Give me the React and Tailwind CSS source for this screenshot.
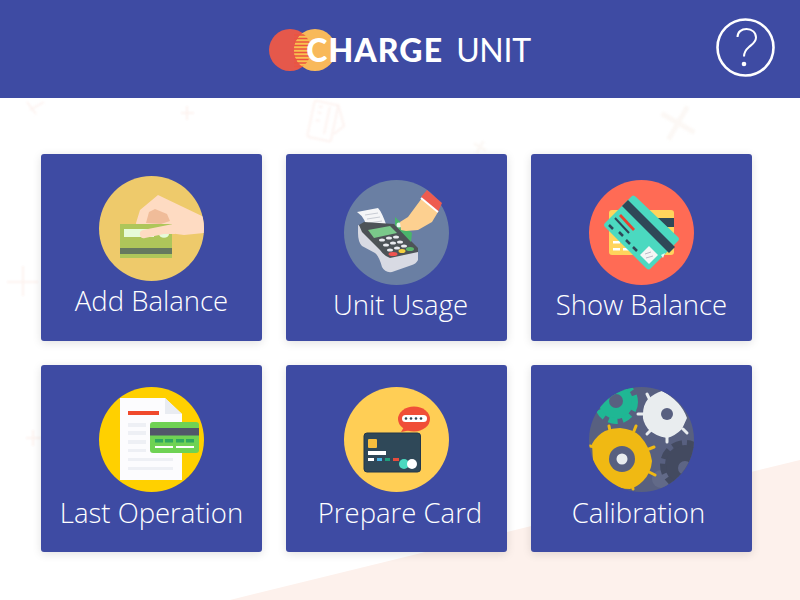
const Backdrop = () => (
  <>
    <svg className="absolute inset-0 w-full h-full" viewBox="0 0 800 502" fill="none">
      <path d="M230 502 L800 362 V502 Z" fill="#fdf1ec" />
    </svg>
    <svg className="absolute inset-0 w-full h-full blur-[1px]" viewBox="0 0 800 502" fill="none">
      <g stroke="#fdf3f0" strokeWidth="2">
        <path d="M23 168 V198 M7 184 H38" />
        <path d="M187 8 V22 M181 15 H194" />
        <path d="M27 4 L36 16 M30 12 L44 4" />
        <path d="M33 332 V348 M26 340 H41" />
        <g transform="rotate(12 325 22)">
          <rect x="311" y="5" width="24" height="37" rx="2" />
          <path d="M316 10 h4 M316 16 h4 M316 24 h4 M327 8 V36" />
        </g>
        <path d="M338 6 L344 28 L334 36" />
      </g>
      <g stroke="#fcf8f5">
        <path d="M678 6 V44 M659 25 H697" strokeWidth="5" transform="rotate(30 678 25)" />
        <path d="M480 42 V56 M473 49 H487" strokeWidth="3" transform="rotate(30 480 49)" />
      </g>
    </svg>
  </>
);

const Logo = () => (
  <div className="flex items-center h-[42px] mt-[2px]">
    <svg className="w-[67px] h-[42px] shrink-0" viewBox="0 0 67 42">
      <defs>
        <clipPath id="logo-overlap">
          <circle cx="21" cy="21" r="21" />
        </clipPath>
      </defs>
      <circle cx="21" cy="21" r="21" fill="#e5584b" />
      <circle cx="46" cy="21" r="21" fill="#f8b95a" />
      <g clipPath="url(#logo-overlap)">
        <circle cx="46" cy="21" r="21" fill="#f8c150" />
        <path d="M25 6 H42 M25 9.5 H42 M25 13 H42 M25 16.5 H42 M25 20 H42 M25 23.5 H42 M25 27 H42 M25 30.5 H42 M25 34 H42 M25 37.5 H42" stroke="#ec5340" strokeWidth="1.6" />
      </g>
    </svg>
    <span className="ml-[-30px] font-['Lato'] font-black text-[32px] leading-none text-white tracking-[1.1px] relative">CHARGE</span>
    <span className="ml-[13px] font-['Lato'] font-normal text-[32px] leading-none text-white tracking-[-0.3px]">UNIT</span>
  </div>
);

const HelpIcon = () => (
  <svg className="w-[59px] h-[59px]" viewBox="0 0 59 59" fill="none" stroke="#fff">
    <circle cx="29.5" cy="29.5" r="28" strokeWidth="2.6" />
    <path d="M21.5 19 C21.5 14 25.5 11 30.5 11 C36 11 40 14.5 40 19.5 C40 24 36.5 26 33 29 C29.5 32 28 34 28 38.5" strokeWidth="2" />
    <circle cx="28" cy="46" r="2.3" fill="#fff" stroke="none" />
  </svg>
);

const AddBalanceIcon = () => (
  <svg className="w-[105px] h-[105px]" viewBox="0 0 105 105">
    <defs>
      <clipPath id="c1"><circle cx="52.5" cy="52.5" r="52.5" /></clipPath>
    </defs>
    <circle cx="52.5" cy="52.5" r="52.5" fill="#eeca6b" />
    <g clipPath="url(#c1)">
      <path d="M37 47 L41 34 L59 19 L105 41 V57 L85 59 L70 57 L44 62 L38 55 Z" fill="#fedbc2" />
      <path d="M47 47 L50 36 L56 33 L68 38 L71 45 L62 48 Z" fill="#f0bc99" />
      <rect x="21" y="48" width="52" height="34" fill="#aec65a" />
      <rect x="21" y="72" width="52" height="6" fill="#66795f" />
      <rect x="25" y="53" width="30" height="8" fill="#e6fbd8" />
      <path d="M60 56 h10 v2 a4 3 0 0 1 -10 0 Z" fill="#e6fbd8" />
      <path d="M44 54 L74 48 L78 52 L76 58 L65 58 L46 62 A4 4 0 0 1 44 54 Z" fill="#fedbc2" />
    </g>
  </svg>
);

const UnitUsageIcon = () => (
  <svg className="w-[105px] h-[105px]" viewBox="0 0 105 105">
    <circle cx="52.5" cy="52.5" r="52.5" fill="#6a7fa3" />
    <path d="M13 32 L34 28 Q38 32 43 47 L24 52 Q22 38 13 32 Z" fill="#f4f5f7" />
    <path d="M21 35 L34 33 M23 39 L36 37 M25 43 L38 41" stroke="#c8ccd4" strokeWidth="1" />
    <path d="M14 45 L74 70 V80 Q72 84 68 85 L48 92 Q41 93 38 87 Q35 76 31 73 L18 66 Q14 62 14 53 Z" fill="#d8dae3" />
    <path d="M15 45 L20 42 L50 44 L74 68 V72 L46 78 Q40 76 36 70 L18 52 Z" fill="#4d5357" />
    <path d="M24 50 L46 46 L53 53 L30 58 Z" fill="#7ac98a" />
    <g fill="#e9ebef">
      <ellipse cx="38" cy="60" rx="3" ry="1.6" />
      <ellipse cx="45" cy="58" rx="3" ry="1.6" />
      <ellipse cx="52" cy="57" rx="3" ry="1.6" />
      <ellipse cx="42" cy="65" rx="3" ry="1.6" />
      <ellipse cx="49" cy="63" rx="3" ry="1.6" />
      <ellipse cx="56" cy="62" rx="3" ry="1.6" />
      <ellipse cx="46" cy="70" rx="3" ry="1.6" />
      <ellipse cx="53" cy="68" rx="3" ry="1.6" />
      <ellipse cx="60" cy="66" rx="3" ry="1.6" />
    </g>
    <ellipse cx="49" cy="74" rx="4.5" ry="2" fill="#ef5350" />
    <ellipse cx="58" cy="71" rx="3.5" ry="2" fill="#f4d03f" />
    <ellipse cx="66" cy="69" rx="4" ry="2" fill="#59b86a" />
    <path d="M51 37 L68 53 L67 62 L51 45 Z" fill="#4ab56b" />
    <circle cx="55" cy="45" r="2.5" fill="#e9f8ee" />
    <path d="M56 42 L64 37 L78 18 L94 32 L88 42 L74 50 L62 51 L57 50 Z" fill="#fdd090" />
    <path d="M77 17 L83 10 L98 23 L94 32 Z" fill="#ee5b4f" />
    <path d="M77 18 L94 32" stroke="#fff" strokeWidth="2" />
  </svg>
);

const ShowBalanceIcon = () => (
  <svg className="w-[105px] h-[105px]" viewBox="0 0 105 105">
    <circle cx="52.5" cy="52.5" r="52.5" fill="#ff6b55" />
    <rect x="20" y="30" width="65" height="45" rx="3" fill="#ffd45c" />
    <rect x="60" y="38" width="25" height="9" fill="#2f4858" />
    <rect x="24" y="61" width="7" height="2.5" fill="#fff" />
    <rect x="24" y="68" width="7" height="2.5" fill="#fff" />
    <rect x="34" y="68" width="7" height="2.5" fill="#fff" />
    <path d="M42 17 Q44 14 47 17 L89 57 Q91 59 89 61 L62 88 Q60 91 57 88 L16 47 Q14 45 16 43 Z" fill="#4bd9c0" />
    <path d="M39 20 L86 67 L80 73 L33 26 Z" fill="#2f4858" />
    <path d="M32 34 L46 49 L44 51 L30 36 Z" fill="#e8402f" />
    <path d="M26 38 L40 53" stroke="#2f4858" strokeWidth="2" />
    <path d="M20 45 L24 49 M30 52 L34 56 M37 60 L41 64 M44 67 L48 71" stroke="#2f4858" strokeWidth="2.5" />
    <path d="M60 66 L69 75 L60 84 L51 75 Z" fill="#f4f6f5" />
    <path d="M56 74 L62 72 M57 78 L64 76" stroke="#aab" strokeWidth="0.8" />
    <path d="M72 75 L76 73 L74 78 Z" fill="#e6f8f2" />
  </svg>
);

const LastOperationIcon = () => (
  <svg className="w-[105px] h-[105px]" viewBox="0 0 105 105">
    <circle cx="52.5" cy="52.5" r="52.5" fill="#ffd000" />
    <path d="M21 11 H66 L83 27 V93 H21 Z" fill="#fcfcfe" />
    <path d="M66 11 L83 27 H66 Z" fill="#e9ecf2" />
    <rect x="29" y="24" width="31" height="4" fill="#f0492c" />
    <g fill="#eef0f5">
      <rect x="29" y="36" width="18" height="4" />
      <rect x="29" y="44" width="18" height="4" />
      <rect x="29" y="53" width="18" height="4" />
      <rect x="29" y="62" width="18" height="3" />
      <rect x="29" y="71" width="45" height="3" />
      <rect x="29" y="80" width="45" height="3" />
    </g>
    <rect x="51" y="35" width="49" height="31" rx="3" fill="#6fd254" />
    <rect x="51" y="41" width="49" height="7.5" fill="#51566a" />
    <g fill="#2fa65e">
      <rect x="56" y="52" width="8" height="3.5" />
      <rect x="66" y="52" width="8" height="3.5" />
      <rect x="77" y="52" width="8" height="3.5" />
      <rect x="87" y="52" width="8" height="3.5" />
    </g>
    <rect x="56" y="59" width="18" height="2" fill="#fff" />
    <rect x="77" y="59" width="18" height="2" fill="#fff" />
  </svg>
);

const PrepareCardIcon = () => (
  <svg className="w-[105px] h-[105px]" viewBox="0 0 105 105">
    <circle cx="52.5" cy="52.5" r="52.5" fill="#ffce55" />
    <rect x="20" y="46" width="56.5" height="39" rx="3" fill="#2f4858" stroke="#22374a" />
    <rect x="24" y="52" width="9" height="9" rx="1" fill="#f7bd3d" />
    <rect x="24" y="64" width="18" height="4" fill="#fff" />
    <rect x="24" y="71" width="6" height="3" fill="#fff" />
    <rect x="33" y="71" width="5" height="3" fill="#4bb4e6" />
    <rect x="41" y="71" width="5" height="3" fill="#1f9e7c" />
    <rect x="49" y="71" width="6" height="3" fill="#e74c3c" />
    <circle cx="60" cy="77" r="5" fill="#4bd9c0" />
    <circle cx="68" cy="77" r="5" fill="#fff" />
    <ellipse cx="70" cy="32" rx="16" ry="12.5" fill="#f04e37" />
    <path d="M60 40 L57 45 L67 43 Z" fill="#f04e37" />
    <rect x="58" y="28" width="25" height="7" rx="3.5" fill="#fff" />
    <g fill="#2f4858">
      <circle cx="62" cy="31.5" r="1.3" />
      <circle cx="67" cy="31.5" r="1.3" />
      <circle cx="72" cy="31.5" r="1.3" />
      <circle cx="77" cy="31.5" r="1.3" />
    </g>
  </svg>
);

const CalibrationIcon = () => (
  <svg className="w-[105px] h-[105px]" viewBox="0 0 105 105">
    <defs>
      <clipPath id="c6"><circle cx="52.5" cy="52.5" r="52.5" /></clipPath>
    </defs>
    <circle cx="52.5" cy="52.5" r="52.5" fill="#586080" />
    <g clipPath="url(#c6)">
      <circle cx="27" cy="15" r="17" fill="#1fb794" />
      <circle cx="27" cy="15" r="19" fill="none" stroke="#1fb794" strokeWidth="6" strokeDasharray="9 5" />
      <circle cx="27" cy="14" r="7" fill="#586080" />
      <circle cx="72" cy="92" r="9" fill="#626a88" />
      <circle cx="96" cy="78" r="20" fill="#434a60" />
      <circle cx="96" cy="78" r="22" fill="none" stroke="#434a60" strokeWidth="6" strokeDasharray="10 5" />
      <circle cx="96" cy="81" r="7" fill="#5d6585" />
      <path d="M58 7 L60 11 M49 27 H55 M58 47 L62 43 M78 55 V50 M98 46 L94 42" stroke="#e9edef" strokeWidth="3" strokeLinecap="round" />
      <path d="M73 4 Q92 14 98 31 L93 42 Q86 49 78 51 Q66 49 59 42 Q53 34 54 27 Q54 18 59 12 Q66 6 73 4 Z" fill="#e9edef" />
      <circle cx="78" cy="27" r="6" fill="#586080" />
      <path d="M20 39 L21 44 M47 39 L45 44 M65 60 L60 62 M66 88 L60 85 M44 102 L43 98 M1 59 L6 60" stroke="#f0b913" strokeWidth="3" strokeLinecap="round" />
      <path d="M31 41 Q44 42 51 49 Q61 60 63 74 Q62 86 54 94 Q48 100 41 102 Q30 102 21 96 Q10 87 4 74 L3 57 Q8 48 16 44 Q23 41 31 41 Z" fill="#f0b913" />
      <circle cx="33" cy="72" r="13" fill="#586080" />
      <circle cx="33" cy="72" r="5.5" fill="#e9edef" />
    </g>
  </svg>
);

const Card = ({ icon, label, circleClass, labelClass }) => (
  <div className="flex flex-col items-center h-[187px] rounded-[3px] bg-[#3e4ba3] shadow-[0_2px_10px_rgba(0,0,0,0.12)]">
    <div className={circleClass}>{icon}</div>
    <span className={labelClass}>{label}</span>
  </div>
);

export default function App() {
  return (
    <div className="w-[800px] h-[600px] flex flex-col overflow-hidden bg-white font-['Open_Sans',sans-serif]">
      <header className="h-[98px] shrink-0 bg-[#3e4ba3] grid grid-cols-[1fr_auto_1fr] items-center">
        <div />
        <Logo />
        <div className="flex justify-end pr-[25px] pb-[4px]">
          <HelpIcon />
        </div>
      </header>
      <main className="relative flex-1">
        <Backdrop />
        <div className="relative grid grid-cols-[221px_221px_221px] gap-x-[24px] gap-y-[24px] pl-[41px] pt-[56px]">
          <Card icon={<AddBalanceIcon />} label="Add Balance" circleClass="mt-[22px]" labelClass="text-[27.5px] leading-[40px] font-light text-white" />
          <Card icon={<UnitUsageIcon />} label="Unit Usage" circleClass="mt-[26px]" labelClass="ml-[8px] text-[27.5px] leading-[40px] font-light text-white" />
          <Card icon={<ShowBalanceIcon />} label="Show Balance" circleClass="mt-[26px]" labelClass="text-[27.5px] leading-[40px] font-light text-white" />
          <Card icon={<LastOperationIcon />} label="Last Operation" circleClass="mt-[22px]" labelClass="mt-[1px] text-[27.5px] leading-[40px] font-light text-white" />
          <Card icon={<PrepareCardIcon />} label="Prepare Card" circleClass="mt-[22px]" labelClass="mt-[1px] ml-[7px] text-[27.5px] leading-[40px] font-light text-white" />
          <Card icon={<CalibrationIcon />} label="Calibration" circleClass="mt-[22px]" labelClass="mt-[1px] mr-[6px] text-[27.5px] leading-[40px] font-light text-white" />
        </div>
      </main>
    </div>
  );
}
